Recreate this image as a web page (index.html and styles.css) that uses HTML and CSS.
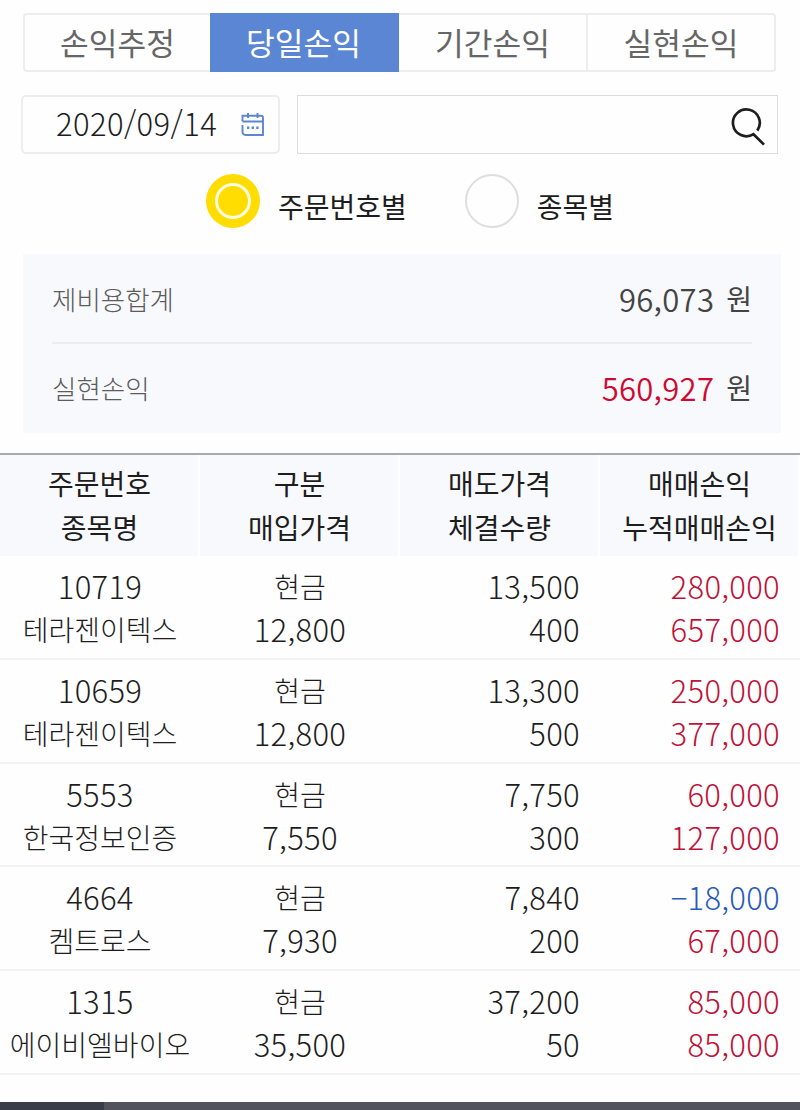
FILE: index.html
```html
<!DOCTYPE html>
<html lang="ko">
<head>
<meta charset="utf-8">
<title>당일손익</title>
<link rel="stylesheet" href="styles.css">
</head>
<body>
<nav class="tabs">
  <a class="tab">손익추정</a>
  <a class="tab active">당일손익</a>
  <a class="tab">기간손익</a>
  <a class="tab">실현손익</a>
</nav>
<div class="filters">
  <div class="date">
    <span>2020/09/14</span>
    <svg class="calendar" viewBox="0 0 24 24" width="24" height="24">
      <path d="M1.5 8.5V2.8H20a2 2 0 0 1 2 2V22H4.5a3 3 0 0 1-3-3V12M1.5 8.5H22M7 0V5M16.5 0V5" fill="none" stroke="#5d86cf" stroke-width="1.9"/>
      <path d="M6 14.7h2.4M10.6 14.7H13M15.2 14.7h2.4" stroke="#5d86cf" stroke-width="2.6"/>
    </svg>
  </div>
  <div class="search">
    <svg viewBox="0 0 36 38" width="36" height="38">
      <path d="M26.3 22.6A13.4 13.4 0 1 0 22.5 26.2L33 36.6" fill="none" stroke="#1d1d1d" stroke-width="2.7"/>
    </svg>
  </div>
</div>
<div class="radios">
  <label class="option"><span class="radio checked"><span class="ring"></span></span><span class="option-text">주문번호별</span></label>
  <label class="option"><span class="radio"></span><span class="option-text">종목별</span></label>
</div>
<section class="summary">
  <div class="line"><span class="label">제비용합계</span><span class="amount">96,073</span><span class="unit">원</span></div>
  <div class="line"><span class="label">실현손익</span><span class="amount gain">560,927</span><span class="unit">원</span></div>
</section>
<section class="table">
  <div class="head">
    <div>주문번호<br>종목명</div>
    <div>구분<br>매입가격</div>
    <div>매도가격<br>체결수량</div>
    <div>매매손익<br>누적매매손익</div>
  </div>
  <div class="row">
    <div><p class="num">10719</p><p>테라젠이텍스</p></div>
    <div><p>현금</p><p class="num">12,800</p></div>
    <div class="right"><p class="num">13,500</p><p class="num">400</p></div>
    <div class="right up"><p class="num">280,000</p><p class="num">657,000</p></div>
  </div>
  <div class="row">
    <div><p class="num">10659</p><p>테라젠이텍스</p></div>
    <div><p>현금</p><p class="num">12,800</p></div>
    <div class="right"><p class="num">13,300</p><p class="num">500</p></div>
    <div class="right up"><p class="num">250,000</p><p class="num">377,000</p></div>
  </div>
  <div class="row">
    <div><p class="num">5553</p><p>한국정보인증</p></div>
    <div><p>현금</p><p class="num">7,550</p></div>
    <div class="right"><p class="num">7,750</p><p class="num">300</p></div>
    <div class="right up"><p class="num">60,000</p><p class="num">127,000</p></div>
  </div>
  <div class="row">
    <div><p class="num">4664</p><p>켐트로스</p></div>
    <div><p>현금</p><p class="num">7,930</p></div>
    <div class="right"><p class="num">7,840</p><p class="num">200</p></div>
    <div class="right up"><p class="num down">−18,000</p><p class="num">67,000</p></div>
  </div>
  <div class="row">
    <div><p class="num">1315</p><p>에이비엘바이오</p></div>
    <div><p>현금</p><p class="num">35,500</p></div>
    <div class="right"><p class="num">37,200</p><p class="num">50</p></div>
    <div class="right up"><p class="num">85,000</p><p class="num">85,000</p></div>
  </div>
</section>
<footer class="bottom"><span class="bottom-active"></span></footer>
</body>
</html>
```
FILE: styles.css
```css
* { box-sizing: border-box; }
body {
  margin: 0;
  height: 1110px;
  overflow: hidden;
  display: flex;
  flex-direction: column;
  background: #fefefe;
  color: #1d1d1d;
  font-family: "Noto Sans CJK KR", sans-serif;
  font-size: 28px;
}
p { margin: 0; }
.tabs {
  display: grid;
  grid-template-columns: 187px 189px 189px 188px;
  height: 59px;
  margin: 13px 23px 0;
}
.tab {
  border: 2px solid #ededed;
  border-left-width: 0;
  color: #666;
  font-size: 31.2px;
  line-height: 53px;
  text-align: center;
}
.tab:first-child { border-left-width: 2px; border-right: 0; border-radius: 4px 0 0 4px; }
.tab:last-child { border-radius: 0 4px 4px 0; }
.tab.active { background: #5a86d4; border-color: #5a86d4; color: #fff; }
.filters { display: flex; gap: 17px; margin: 23px 22px 0 21px; height: 59px; }
.date {
  width: 259px;
  display: flex;
  align-items: center;
  justify-content: space-between;
  padding: 0 13px 0 33px;
  border: 2px solid #ededed;
  border-radius: 5px;
  font-size: 31px;
  font-weight: 300;
  letter-spacing: 0.4px;
  line-height: 52px;
}
.date span { height: 55px; }
.search {
  flex: 1;
  display: flex;
  align-items: center;
  justify-content: flex-end;
  padding: 4px 10px 0 0;
  border: 1px solid #dcdcdc;
}
.radios { display: flex; gap: 58px; margin: 20px 0 0 206px; height: 54px; }
.option { display: flex; gap: 18px; align-items: center; }
.radio { width: 54px; height: 54px; border: 2px solid #dedede; border-radius: 50%; }
.radio.checked { display: grid; place-items: center; border: 0; background: #ffdd00; }
.ring { width: 36px; height: 36px; border: 3px solid #fffbe0; border-radius: 50%; }
.option-text { padding-top: 10px; line-height: 46px; }
.summary { margin: 26px 19px 0 23px; height: 179px; padding: 0 29px; background: #f8f9fd; }
.line { display: flex; height: 89px; line-height: 87px; color: #444; }
.line:first-child { border-bottom: 2px solid #ececec; height: 90px; line-height: 89px; }
.label { flex: 1; color: #5c5c5c; font-size: 26.5px; font-weight: 300; }
.amount { font-size: 31px; letter-spacing: 0.3px; font-weight: 350; }
.unit { margin-left: 12px; }
.gain { color: #cf0a32; }
.table { margin-top: 20px; border-top: 2px solid #a9aaad; }
.head, .row { display: grid; grid-template-columns: repeat(4, 200px); text-align: center; }
.head { height: 101px; }
.head div { padding: 6px 0 0 1px; background: #f8f9fd; border-right: 2px solid #fefefe; line-height: 44px; font-size: 28px; }
.row { height: 103.8px; border-bottom: 2px solid #f3f3f3; padding-top: 9px; font-weight: 300; line-height: 43px; }
.row p { height: 43px; }
.row .num { font-size: 31px; letter-spacing: 0.3px; line-height: 41px; }
.right { text-align: right; padding-right: 20px; }
.up { color: #bf1238; }
.down { color: #285abb; }
.bottom { margin-top: auto; height: 8px; background: #51545c; display: flex; }
.bottom-active { width: 104px; background: #383d47; }
```
